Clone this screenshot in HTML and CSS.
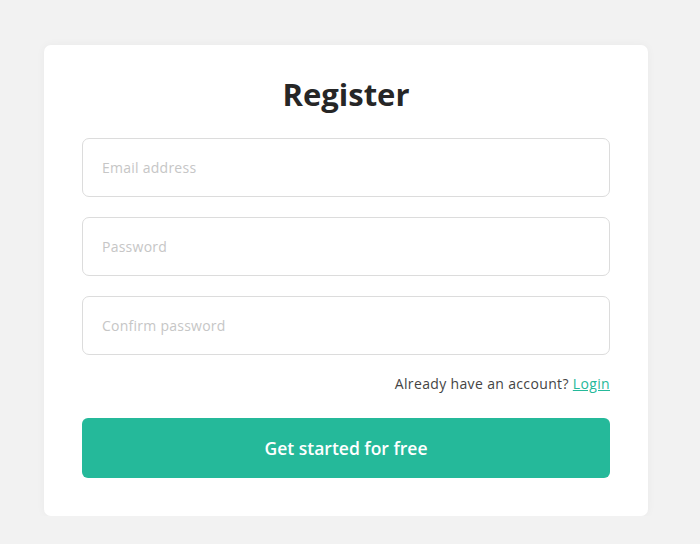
FILE: index.html
```html
<!DOCTYPE html>
<html>
<head>
<meta charset="utf-8">
<link rel="stylesheet" href="styles.css">
</head>
<body>
<div class="page">
  <form class="card">
    <h1 class="title">Register</h1>
    <input class="field" type="email" placeholder="Email address">
    <input class="field" type="password" placeholder="Password">
    <input class="field" type="password" placeholder="Confirm password">
    <p class="switch">Already have an account? <a class="link" href="#">Login</a></p>
    <button class="submit" type="button">Get started for free</button>
  </form>
</div>
</body>
</html>
```
FILE: styles.css
```css
html, body {
  margin: 0;
  padding: 0;
  background: #f2f2f2;
  font-family: "Open Sans", "Noto Sans", sans-serif;
}
.page {
  padding: 45px 0 0 44px;
}
.card {
  box-sizing: border-box;
  width: 604px;
  background: #fff;
  border-radius: 7px;
  box-shadow: 0 0 10px rgba(0,0,0,0.04);
  padding: 25px 38px 38px;
  display: flex;
  flex-direction: column;
}
.title {
  margin: 0 0 20px;
  text-align: center;
  font-size: 31px;
  line-height: 48px;
  font-weight: 700;
  color: #262626;
}
.field {
  box-sizing: border-box;
  height: 59px;
  width: 100%;
  border: 1px solid #dcdcdc;
  border-radius: 7px;
  padding: 0 19px;
  font-family: inherit;
  font-size: 14px;
  letter-spacing: 0.25px;
  margin: 0 0 20px;
  outline: none;
}
.field::placeholder {
  color: #c6c6c6;
}
.switch {
  margin: -3px 0 0;
  text-align: right;
  font-size: 14px;
  letter-spacing: 0.35px;
  line-height: 24px;
  color: #444;
}
.link {
  color: #25b99a;
  text-decoration: underline;
}
.submit {
  margin-top: 22px;
  height: 60px;
  border: none;
  border-radius: 6px;
  background: #25b99a;
  color: #fff;
  font-family: inherit;
  font-size: 17.5px;
  font-weight: 600;
}
```
